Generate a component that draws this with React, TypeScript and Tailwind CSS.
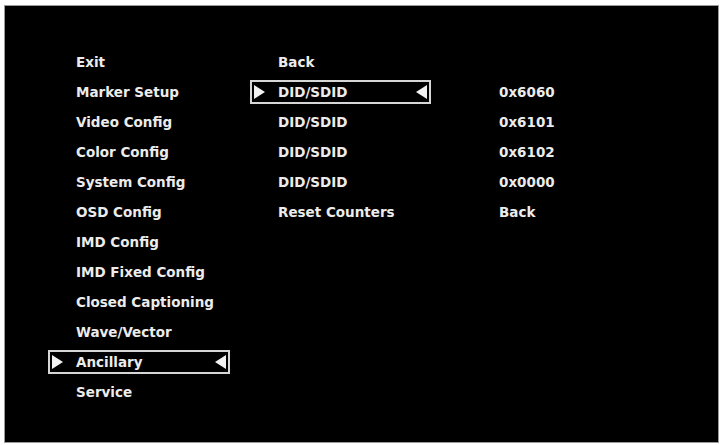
import React from "react";

const mainMenu = [
  "Exit",
  "Marker Setup",
  "Video Config",
  "Color Config",
  "System Config",
  "OSD Config",
  "IMD Config",
  "IMD Fixed Config",
  "Closed Captioning",
  "Wave/Vector",
  "Ancillary",
  "Service",
];

const subMenu = ["Back", "DID/SDID", "DID/SDID", "DID/SDID", "DID/SDID", "Reset Counters"];
const values = ["", "0x6060", "0x6101", "0x6102", "0x0000", "Back"];

function Arrow({ dir }: { dir: "right" | "left" }) {
  return (
    <svg width="11" height="14" viewBox="0 0 11 14" className="shrink-0">
      {dir === "right" ? (
        <polygon points="0,0 11,7 0,14" fill="#f2f2f2" />
      ) : (
        <polygon points="11,0 0,7 11,14" fill="#f2f2f2" />
      )}
    </svg>
  );
}

function Item({ label, selected, width }: { label: string; selected?: boolean; width: string }) {
  if (!selected) {
    return (
      <div className="flex h-[30px] items-center pl-[28px]">
        <span>{label}</span>
      </div>
    );
  }
  return (
    <div className="flex h-[30px] items-center">
      <div className={`flex h-[24px] ${width} items-center border-2 border-[#d6d6d6] px-[2px]`}>
        <Arrow dir="right" />
        <span className="ml-[13px]">{label}</span>
        <span className="ml-auto">
          <Arrow dir="left" />
        </span>
      </div>
    </div>
  );
}

export default function App() {
  return (
    <div className="h-[445px] w-[720px] bg-white pl-[5px] pt-[6px]">
      <div
        className="h-[436px] w-[713px] bg-black pl-[43px] pt-[41px] text-[13.5px] font-bold text-[#ececec] ring-1 ring-[#9a9a9a]"
        style={{ fontFamily: '"DejaVu Sans", sans-serif' }}
      >
        <div className="flex">
          <div className="w-[202px]">
            {mainMenu.map((m, i) => (
              <Item key={i} label={m} selected={m === "Ancillary"} width="w-[182px]" />
            ))}
          </div>
          <div className="w-[249px]">
            {subMenu.map((m, i) => (
              <Item key={i} label={m} selected={i === 1} width="w-[181px]" />
            ))}
          </div>
          <div>
            {values.map((v, i) => (
              <div key={i} className="flex h-[30px] items-center">
                {v}
              </div>
            ))}
          </div>
        </div>
      </div>
    </div>
  );
}
